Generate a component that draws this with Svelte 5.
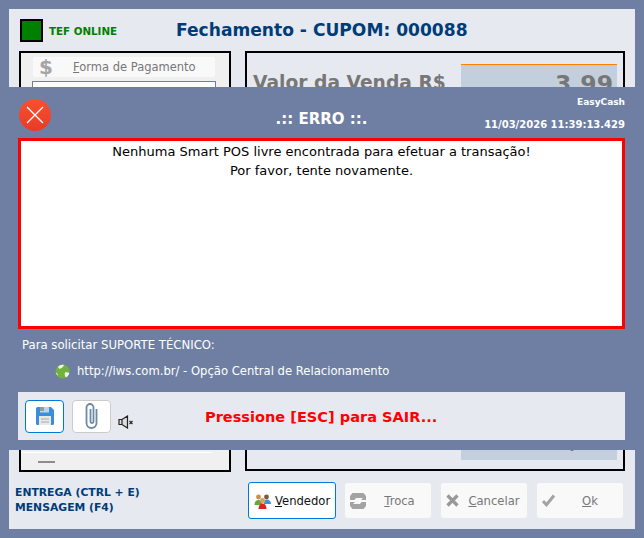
<script>
  const buttons = [
    { key: 'T', rest: 'roca', icon: 'swap' },
    { key: 'C', rest: 'ancelar', icon: 'cancel' },
    { key: 'O', rest: 'k', icon: 'check' }
  ]
</script>

<div class="page">
  <div class="window">
    <header class="top">
      <div class="status">
        <span class="led"></span>
        <span class="tef">TEF ONLINE</span>
      </div>
      <h1>Fechamento - CUPOM: 000088</h1>
    </header>

    <div class="panels">
      <section class="left">
        <div class="pay_area">
          <div class="pay_btn">
            <span class="dollar">$</span>
            <span class="pay_label"><u>F</u>orma de Pagamento</span>
          </div>
          <div class="pay_list"></div>
        </div>
        <div class="dash"></div>
      </section>
      <section class="right">
        <div class="row_total">
          <span class="total_label">Valor da Venda R$</span>
          <span class="total_box">3,99</span>
        </div>
        <div class="row_bottom">
          <span class="change_box">0,00</span>
        </div>
      </section>
    </div>

    <footer class="bottom">
      <div class="shortcuts">
        <div>ENTREGA (CTRL + E)</div>
        <div>MENSAGEM (F4)</div>
      </div>
      <div class="actions">
        <button class="act seller">
          <svg width="18" height="18" viewBox="0 0 18 18">
            <circle cx="4.5" cy="5" r="2.4" fill="#c98d4a" />
            <path d="M0.5 13c0-3.4 1.6-5 4-5s3.5 1.600 3.500 5z" fill="#6aa53a" />
            <circle cx="12.5" cy="5" r="2.4" fill="#7a5a3a" />
            <path d="M10 12c0-3 1-4.500 3-4.500s4 1.500 4 4.500z" fill="#3a92d8" />
            <circle cx="8.500" cy="8.500" r="2.500" fill="#d9a066" />
            <path d="M4.500 17c0-3.500 1.500-5.500 4-5.500s4 2 4 5.500z" fill="#d8261c" />
          </svg>
          <span><u>V</u>endedor</span>
        </button>
        {#each buttons as b}
          <button class="act off">
            {#if b.icon === 'swap'}
              <svg class="ic" width="16" height="16" viewBox="0 0 16 16">
                <path d="M0 3 2.500 0h11L16 3v4h-5l2-2H6L4.500 7H0z" fill="#a3a3a3" />
                <path d="M0 9h5l-2 2h7l1.500-2H16v4l-2.500 3h-11L0 13z" fill="#a3a3a3" />
              </svg>
            {:else if b.icon === 'cancel'}
              <svg class="ic" width="13" height="13" viewBox="0 0 13 13">
                <path d="M1.500 1.500l10 10M11.500 1.500l-10 10" stroke="#999" stroke-width="3.200" />
              </svg>
            {:else}
              <svg class="ic" width="13" height="13" viewBox="0 0 13 13">
                <path d="M1 7l3.500 3.800L12 1.500" stroke="#a3a3a3" stroke-width="3" fill="none" />
              </svg>
            {/if}
            <span class="act_label"><u>{b.key}</u>{b.rest}</span>
          </button>
        {/each}
      </div>
    </footer>
  </div>

  <div class="modal">
    <div class="modal_head">
      <div class="close">
        <svg width="18" height="18" viewBox="0 0 18 18">
          <path d="M1 1l16 16M17 1L1 17" stroke="#fff" stroke-width="1.300" />
        </svg>
      </div>
      <div class="modal_title">.:: ERRO ::.</div>
      <div class="modal_meta">
        <div class="app_name">EasyCash</div>
        <div class="stamp">11/03/2026 11:39:13.429</div>
      </div>
    </div>

    <div class="message">
      <div>Nenhuma Smart POS livre encontrada para efetuar a transação!</div>
      <div>Por favor, tente novamente.</div>
    </div>

    <div class="support">Para solicitar SUPORTE TÉCNICO:</div>
    <div class="link">
      <svg width="15" height="15" viewBox="0 0 15 15">
        <circle cx="7.500" cy="7.500" r="7" fill="#72b13e" />
        <path d="M3 2.800C4.500 1 7 .4 9 .9 8.500 2.500 6.500 4.500 4.200 4.800zM10 8.500c1.500-.5 3.200-.3 4.300.5-.4 2-1.700 3.600-3.300 4.500-1-1-1.800-3.200-1-5zM1 8.500c1 .5 2 1.500 2 3-1.200-.7-1.800-1.800-2-3z" fill="#eef5e8" />
      </svg>
      <span>http://iws.com.br/ - Opção Central de Relacionamento</span>
    </div>

    <div class="modal_bar">
      <button class="tool active" aria-label="Salvar">
        <svg width="20" height="20" viewBox="0 0 20 20">
          <path d="M1 2.500A1.500 1.500 0 0 1 2.500 1H16l3 3v13.500a1.500 1.500 0 0 1-1.500 1.500h-15A1.500 1.500 0 0 1 1 17.500z" fill="#3b8fd9" />
          <rect x="5" y="1" width="9" height="5.500" fill="#b9d5ee" />
          <rect x="5" y="1" width="4" height="4" fill="#9a9a9a" />
          <rect x="4" y="10" width="12" height="9" fill="#e8e8e4" />
          <path d="M6 13h8M6 16h8" stroke="#aaa" stroke-width="1" />
        </svg>
      </button>
      <button class="tool" aria-label="Anexar">
        <svg width="17" height="28" viewBox="0 0 17 28">
          <path d="M13.500 7v14a5 5 0 0 1-10 0V5.500a3.500 3.500 0 0 1 7 0V19.500a1.500 1.500 0 0 1-3 0V7" fill="none" stroke="#6a8aa5" stroke-width="1.800" />
        </svg>
      </button>
      <svg class="mute" width="16" height="14" viewBox="0 0 16 14">
        <path d="M1 4.500h3L9.500 1v12L4 9.500H1zM4 4.500v5" fill="#ddd" stroke="#222" stroke-width="1.200" />
        <path d="M11.500 6l3 3M14.500 6l-3 3" stroke="#222" stroke-width="1.100" />
      </svg>
      <div class="esc">Pressione [ESC] para SAIR...</div>
    </div>
  </div>
</div>

<style>
  :global(body) {
    margin: 0;
    background: #6e7fa3;
  }

  .page {
    position: relative;
    width: 644px;
    height: 538px;
    padding: 9px;
    box-sizing: border-box;
    overflow: hidden;
    font-family: "DejaVu Sans", sans-serif;
  }

  .window {
    height: 520px;
    background: #e6e9ef;
    display: flex;
    flex-direction: column;
    padding: 0 0 0 10px;
    box-sizing: border-box;
  }

  .top {
    height: 42px;
    display: flex;
    align-items: center;
    padding-left: 1px;
  }

  .status {
    width: 156px;
    display: flex;
    align-items: center;
    gap: 6px;
  }

  .led {
    width: 23px;
    height: 23px;
    box-sizing: border-box;
    background: #008000;
    border: 2px solid #000;
  }

  .tef {
    font-size: 10.300px;
    font-weight: 700;
    color: #008000;
    padding-top: 2px;
  }

  h1 {
    margin: 0;
    font-size: 17.100px;
    font-weight: 700;
    color: #003c78;
  }

  .panels {
    height: 421px;
    display: flex;
    gap: 14px;
  }

  .left {
    width: 212px;
    box-sizing: border-box;
    border: 2px solid #000;
    background: #f0f0f0;
  }

  .pay_area {
    margin-right: 16px;
    padding: 4px 0 0 11px;
    width: 191px;
    box-sizing: border-box;
    height: 400px;
    border-bottom: 1px solid #fff;
  }

  .pay_btn {
    height: 20px;
    width: 182px;
    margin: 0 0 4px 1px;
    background: #f9f9fa;
    border-radius: 3px;
    display: flex;
    align-items: center;
    color: #777;
    font-size: 11.500px;
  }

  .dollar {
    width: 26px;
    margin-right: 14px;
    text-align: center;
    font-size: 20px;
    font-weight: 700;
    color: #a5a5a5;
  }

  .pay_list {
    height: 300px;
    width: 182px;
    border: 1px solid #6e7fa3;
    background: #fff;
  }

  .dash {
    width: 17px;
    height: 2px;
    background: #8c8c8c;
    margin: 8px 0 0 17px;
  }

  .right {
    width: 380px;
    box-sizing: border-box;
    border: 2px solid #000;
    height: 420px;
    display: flex;
    flex-direction: column;
    justify-content: space-between;
    padding: 11px 6px 9px 6px;
  }

  .row_total {
    display: flex;
    justify-content: space-between;
  }

  .total_label {
    font-size: 18.700px;
    font-weight: 700;
    color: #777;
    padding-top: 8px;
    white-space: nowrap;
  }

  .total_box {
    width: 156px;
    height: 60px;
    box-sizing: border-box;
    background: #c3cfdc;
    border-top: 1px solid #ff8000;
    text-align: right;
    padding-right: 4px;
    font-size: 23.500px;
    font-weight: 700;
    color: #777;
    line-height: 38px;
  }

  .row_bottom {
    display: flex;
    justify-content: flex-end;
  }

  .change_box {
    width: 156px;
    height: 30px;
    box-sizing: border-box;
    background: #c3cfdc;
    text-align: right;
    padding-right: 6px;
    font-size: 23.500px;
    font-weight: 700;
    color: #777;
    line-height: 21px;
  }

  .bottom {
    flex: 1;
    display: flex;
    justify-content: space-between;
    padding: 10px 12px 0 0;
  }

  .shortcuts {
    margin-left: -4px;
    padding-top: 3px;
    font-size: 10.800px;
    font-weight: 700;
    line-height: 15px;
    color: #003c78;
  }

  .actions {
    display: flex;
    gap: 10px;
    align-items: flex-start;
  }

  .act {
    width: 86px;
    height: 35px;
    margin-top: 1px;
    padding: 0 0 0 5px;
    box-sizing: border-box;
    border: 0;
    border-radius: 3px;
    background: #f9f9fa;
    display: flex;
    align-items: center;
    font-family: inherit;
    font-size: 11.600px;
    color: #777;
  }

  .seller {
    width: 88px;
    height: 37px;
    margin: 0 -1px 0 0;
    border: 1px solid #0078d7;
    background: #fff;
    color: #111;
    gap: 3px;
  }

  .act_label {
    flex: 1;
    text-align: center;
    padding-left: 2px;
  }

  .ic {
    flex: none;
  }

  .modal {
    position: absolute;
    left: 0;
    top: 87px;
    width: 644px;
    height: 363px;
    background: #6e7fa3;
    padding: 0 19px 0 18px;
    box-sizing: border-box;
    color: #fff;
  }

  .modal_head {
    height: 51px;
    position: relative;
    display: flex;
    justify-content: center;
  }

  .close {
    position: absolute;
    left: 1px;
    top: 12px;
    width: 32px;
    height: 32px;
    border-radius: 50%;
    background: linear-gradient(#f9502f, #e63c28);
    display: flex;
    align-items: center;
    justify-content: center;
  }

  .modal_title {
    font-size: 15px;
    font-weight: 700;
    padding-top: 23px;
  }

  .modal_meta {
    position: absolute;
    right: 0;
    top: 9px;
    text-align: right;
    font-weight: 700;
    line-height: 12px;
  }

  .app_name {
    font-size: 9px;
  }

  .stamp {
    margin-top: 11px;
    font-size: 10px;
  }

  .message {
    height: 191px;
    box-sizing: border-box;
    border: 3px solid #f00;
    background: #fff;
    color: #000;
    font-size: 13px;
    line-height: 19px;
    text-align: center;
    padding-top: 1px;
  }

  .support {
    font-size: 11.700px;
    padding: 9px 0 0 4px;
    line-height: 15px;
  }

  .link {
    display: flex;
    align-items: center;
    gap: 7px;
    font-size: 11.600px;
    line-height: 15px;
    padding: 11px 0 0 37px;
  }

  .modal_bar {
    margin-top: 13px;
    height: 48px;
    background: #e6e9ef;
    display: flex;
    align-items: center;
    padding-left: 7px;
  }

  .tool {
    width: 39px;
    height: 33px;
    padding: 0;
    margin-right: 8px;
    border: 1px solid #ccc;
    border-radius: 4px;
    background: #fff;
    display: flex;
    align-items: center;
    justify-content: center;
  }

  .active {
    border-color: #0078d7;
  }

  .mute {
    margin: 11px 0 0 -1px;
  }

  .esc {
    margin-left: 71px;
    color: #f00;
    font-size: 14.550px;
    font-weight: 700;
  }
</style>
